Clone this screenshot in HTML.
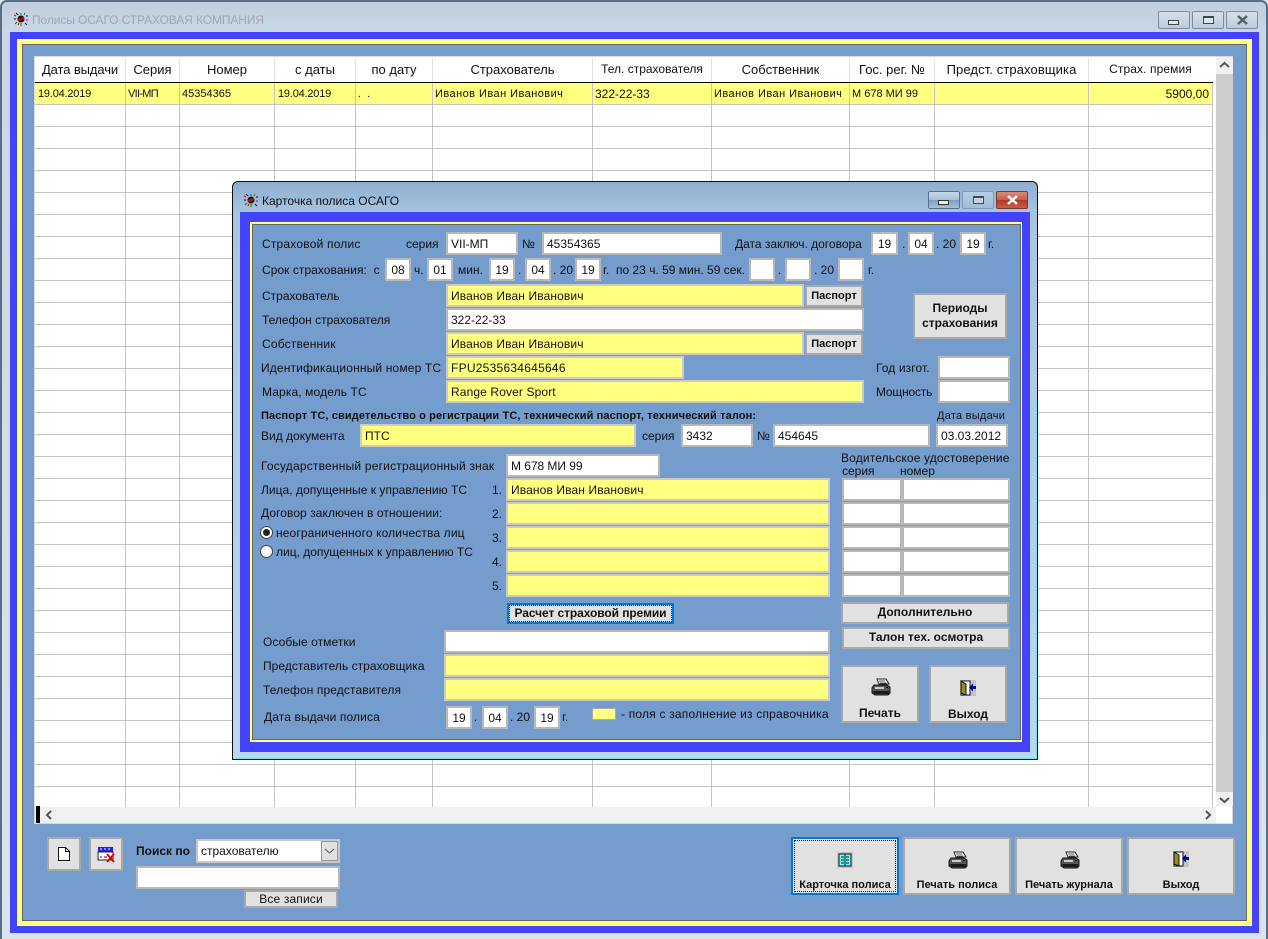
<!DOCTYPE html>
<html lang="ru"><head><meta charset="utf-8"><title>Полисы ОСАГО</title>
<style>
html,body{margin:0;padding:0;width:1268px;height:939px;overflow:hidden;background:#d8e4f2;font-family:"Liberation Sans",Arial,sans-serif;font-size:12px;color:#111}
div,svg{position:absolute;box-sizing:border-box}
.t{white-space:nowrap;line-height:14px}
.h{font-size:13px;top:62px;text-align:center;line-height:15px;white-space:nowrap;color:#111}
.r{font-size:11px;top:87px;line-height:14px;white-space:nowrap}
.n{letter-spacing:.45px}
.v{width:1px;top:83px;height:724px;background:#c4c4c4}
.hv{width:1px;top:58px;height:24px;background:#e2e2e2}
.i{background:#fff;border:2px solid #b8b8b8;line-height:20px;padding-left:3px;white-space:nowrap;color:#111}
.y{background:#ffff80;border-color:#cacaca}
.c{text-align:center;padding-left:0}
.k{letter-spacing:.12px}
.b{background:#e1e1e1;border:2px solid #a8a8a8;text-align:center;font-weight:bold;white-space:nowrap;color:#111}
.bi{background:#e1e1e1;border:2px solid #a8a8a8}
</style></head><body>
<svg width="0" height="0" style="left:0;top:0"><defs>
<g id="pr"><path d="M6 1h9l3 5H8z" fill="#fff" stroke="#222" stroke-width="1"/><path d="M8 3h6M9 5h6" stroke="#555"/><path d="M3 7h13l3 2v6l-2 2H4l-3-2v-5z" fill="#555" stroke="#111"/><path d="M2 13h16v3H3z" fill="#1c1c1c"/><path d="M4 9h9v2H4z" fill="#ccc"/><path d="M15 9h2v1h-2z" fill="#111"/></g>
<g id="dr"><rect width="16" height="16" fill="#c4c4c4"/><rect x="1" y="1" width="9" height="14" fill="#fff" stroke="#111"/><path d="M1 1l5 3v11l-5-2z" fill="#8f8f1e" stroke="#111"/><path d="M16 6h-3V3.500L9 7.500l4 4V9h3z" fill="#000090"/></g>
<g id="ap"><circle cx="8" cy="7" r="3.500" fill="#111"/><path d="M5 8l6-2" stroke="#d00" stroke-width="2"/><path d="M1 7h2M13 4h2M3 1l2 2M12 11l2 2" stroke="#008" stroke-width="1"/><path d="M8 1v2M2 12l2-2M12 1l-1 2M8 11v3" stroke="#080" stroke-width="1"/><path d="M1 3l2 1M13 8h2M5 13l1-2" stroke="#d00" stroke-width="1"/></g>
</defs></svg>

<!-- outer window -->
<div style="left:0;top:0;width:1268px;height:939px;background:linear-gradient(#bfcfdf 0,#c9d8e6 32px,#d8e4f2 100%);border:2px solid #5a6d85;border-bottom:0;border-radius:7px 7px 0 0"></div>
<svg style="left:13px;top:12px" width="16" height="16"><use href="#ap"/></svg>
<div class="t" style="left:32px;top:13px;color:#a3a6aa;font-size:12px;letter-spacing:-.1px">Полисы ОСАГО СТРАХОВАЯ КОМПАНИЯ</div>
<div style="left:1158px;top:11px;width:32px;height:18px;border:1px solid #7d8c9e;border-radius:2px;background:linear-gradient(#d6e0ea,#bccbdb)"><div style="left:9px;top:8px;width:11px;height:5px;border:1px solid #3c4650;background:#e6e6e6"></div></div>
<div style="left:1192px;top:11px;width:32px;height:18px;border:1px solid #7d8c9e;border-radius:2px;background:linear-gradient(#d6e0ea,#bccbdb)"><div style="left:10px;top:4px;width:11px;height:8px;border:1px solid #3c4650;border-top-width:2px;background:#dfe6ec"></div></div>
<div style="left:1226px;top:11px;width:32px;height:18px;border:1px solid #7d8c9e;border-radius:2px;background:linear-gradient(#d6e0ea,#bccbdb)"><svg style="left:9px;top:3px" width="13" height="10"><path d="M2 1l9 8M11 1l-9 8" stroke="#56616e" stroke-width="2.500"/></svg></div>

<div style="left:10px;top:32px;width:1249px;height:901px;background:#4242ff"></div>
<div style="left:17px;top:39px;width:1235px;height:887px;background:#ffff80"></div>
<div style="left:22px;top:44px;width:1225px;height:877px;background:#749ccc;border:1px solid #666"></div>

<!-- grid -->
<div style="left:34px;top:56px;width:1199px;height:768px;background:#fff;border:1px solid #d8d8d8"></div>
<div style="left:35px;top:83px;width:1178px;height:724px;background:repeating-linear-gradient(#fff 0,#fff 21px,#c4c4c4 21px,#c4c4c4 22px)"></div>
<div style="left:35px;top:83px;width:1178px;height:21px;background:#ffff80"></div>
<div style="left:35px;top:82px;width:1178px;height:1px;background:#000"></div>
<div class="v" style="left:125px"></div><div class="v" style="left:179px"></div><div class="v" style="left:274px"></div><div class="v" style="left:355px"></div><div class="v" style="left:432px"></div><div class="v" style="left:592px"></div><div class="v" style="left:711px"></div><div class="v" style="left:849px"></div><div class="v" style="left:934px"></div><div class="v" style="left:1088px"></div><div class="v" style="left:1212px"></div>
<div class="hv" style="left:125px"></div><div class="hv" style="left:179px"></div><div class="hv" style="left:274px"></div><div class="hv" style="left:355px"></div><div class="hv" style="left:432px"></div><div class="hv" style="left:592px"></div><div class="hv" style="left:711px"></div><div class="hv" style="left:849px"></div><div class="hv" style="left:934px"></div><div class="hv" style="left:1088px"></div>
<div class="h" style="left:35px;width:90px;letter-spacing:-.1px">Дата выдачи</div>
<div class="h" style="left:126px;width:53px">Серия</div>
<div class="h" style="left:180px;width:94px">Номер</div>
<div class="h" style="left:275px;width:80px">с даты</div>
<div class="h" style="left:356px;width:76px">по дату</div>
<div class="h" style="left:433px;width:159px">Страхователь</div>
<div class="h" style="left:593px;width:118px;font-size:12px">Тел. страхователя</div>
<div class="h" style="left:712px;width:137px">Собственник</div>
<div class="h" style="left:850px;width:84px">Гос. рег. №</div>
<div class="h" style="left:935px;width:153px;letter-spacing:.1px">Предст. страховщика</div>
<div class="h" style="left:1089px;width:123px;font-size:12px;letter-spacing:.1px">Страх. премия</div>
<div class="r" style="left:38px;letter-spacing:-.2px">19.04.2019</div>
<div class="r" style="left:128px;letter-spacing:-.7px">VII-МП</div>
<div class="r" style="left:182px">45354365</div>
<div class="r" style="left:278px;letter-spacing:-.2px">19.04.2019</div>
<div class="r" style="left:358px">.&nbsp;&nbsp;.</div>
<div class="r n" style="left:435px">Иванов Иван Иванович</div>
<div class="r" style="left:595px;font-size:12px">322-22-33</div>
<div class="r n" style="left:714px">Иванов Иван Иванович</div>
<div class="r" style="left:852px">М 678 МИ 99</div>
<div class="r" style="left:1163px;width:46px;text-align:right;font-size:12px">5900,00</div>

<!-- scrollbars -->
<div style="left:1216px;top:57px;width:17px;height:749px;background:#f0f0f0"></div>
<div style="left:1216px;top:74px;width:17px;height:718px;background:#cdcdcd"></div>
<svg style="left:1218px;top:60px" width="13" height="10"><path d="M2 7l4.500-4 4.500 4" fill="none" stroke="#555" stroke-width="2"/></svg>
<svg style="left:1218px;top:795px" width="13" height="10"><path d="M2 3l4.500 4 4.500-4" fill="none" stroke="#555" stroke-width="2"/></svg>
<div style="left:35px;top:807px;width:1181px;height:16px;background:#f0f0f0"></div>
<div style="left:36px;top:806px;width:4px;height:17px;background:#000"></div>
<svg style="left:44px;top:809px" width="10" height="12"><path d="M7 2L3 6l4 4" fill="none" stroke="#555" stroke-width="2"/></svg>
<svg style="left:1203px;top:809px" width="10" height="12"><path d="M3 2l4 4-4 4" fill="none" stroke="#555" stroke-width="2"/></svg>

<!-- bottom -->
<div class="bi" style="left:47px;top:837px;width:34px;height:34px"></div>
<svg style="left:57px;top:846px" width="14" height="16"><path d="M1.500 1.500h7l4 4v9h-11z" fill="#fff" stroke="#111"/><path d="M8.500 1.500v4h4" fill="none" stroke="#111"/></svg>
<div class="bi" style="left:89px;top:837px;width:34px;height:34px"></div>
<svg style="left:97px;top:846px" width="20" height="18"><rect x="1" y="1" width="15" height="5" fill="#2222dd"/><path d="M3 3h2M7 3h2M11 3h2" stroke="#fff"/><rect x="1" y="6" width="15" height="8" fill="#fff" stroke="#222"/><path d="M3 11h2M7 11h3" stroke="#222"/><path d="M10 8l7 8M17 8l-7 8" stroke="#e00" stroke-width="2"/></svg>
<div class="t" style="left:136px;top:844px;font-weight:bold;color:#111">Поиск по</div>
<div class="i" style="left:196px;top:839px;width:144px;height:24px;border-color:#c8c8c8">страхователю</div>
<div style="left:321px;top:841px;width:17px;height:20px;background:#e1e1e1;border:1px solid #999"></div>
<svg style="left:323px;top:847px" width="13" height="8"><path d="M2 2l4.500 4L11 2" fill="none" stroke="#555" stroke-width="1"/></svg>
<div class="i" style="left:136px;top:866px;width:204px;height:23px"></div>
<div class="b" style="left:244px;top:890px;width:94px;height:18px;font-weight:normal;line-height:14px;letter-spacing:.15px">Все записи</div>

<div class="bi" style="left:791px;top:837px;width:108px;height:58px;border:2px solid #0078d7"><div style="left:1px;top:1px;width:102px;height:52px;border:1px dotted #111"></div></div>
<svg style="left:837px;top:852px" width="16" height="16"><rect width="16" height="16" fill="#c4c4c4"/><rect x="2" y="2" width="12" height="12" fill="#6ff" stroke="#111"/><path d="M4 5h3M9 5h3M4 8h3M9 8h3M4 11h3M9 11h3M8 2v12" stroke="#111"/></svg>
<div class="t" style="left:791px;top:878px;width:108px;text-align:center;font-weight:bold;font-size:11px">Карточка полиса</div>
<div class="bi" style="left:903px;top:837px;width:108px;height:58px"></div>
<svg style="left:948px;top:851px" width="20" height="18"><use href="#pr"/></svg>
<div class="t" style="left:903px;top:878px;width:108px;text-align:center;font-weight:bold;font-size:11px">Печать полиса</div>
<div class="bi" style="left:1015px;top:837px;width:108px;height:58px"></div>
<svg style="left:1060px;top:851px" width="20" height="18"><use href="#pr"/></svg>
<div class="t" style="left:1015px;top:878px;width:108px;text-align:center;font-weight:bold;font-size:11px">Печать журнала</div>
<div class="bi" style="left:1127px;top:837px;width:108px;height:58px"></div>
<svg style="left:1173px;top:851px" width="16" height="16"><use href="#dr"/></svg>
<div class="t" style="left:1127px;top:878px;width:108px;text-align:center;font-weight:bold;font-size:11px">Выход</div>

<!-- dialog -->
<div style="left:232px;top:181px;width:806px;height:579px;background:linear-gradient(#8eaed0 0,#a8c6e2 32px,#bcd8ee 100%);border:1px solid #111;border-radius:6px 6px 0 0"></div>
<div style="left:1036px;top:400px;width:1px;height:359px;background:#6fe0e8"></div>
<div style="left:233px;top:758px;width:804px;height:1px;background:#6fe0e8"></div>
<svg style="left:243px;top:193px" width="16" height="16"><use href="#ap"/></svg>
<div class="t" style="left:262px;top:194px;font-size:12px;color:#111">Карточка полиса ОСАГО</div>
<div style="left:928px;top:191px;width:32px;height:18px;border:1px solid #566f8c;border-radius:2px;background:linear-gradient(#c8d8e8 0,#a4bed8 50%,#7f9fc0 51%,#a4c0dc 100%)"><div style="left:9px;top:8px;width:11px;height:5px;border:1px solid #333;background:#eee"></div></div>
<div style="left:962px;top:191px;width:32px;height:18px;border:1px solid #7f9cba;border-radius:2px;background:linear-gradient(#b8cee2,#a0bcd8)"><div style="left:10px;top:4px;width:11px;height:8px;border:1px solid #3c4a5a;border-top-width:2px;background:#c4d4e4"></div></div>
<div style="left:996px;top:191px;width:32px;height:18px;border:1px solid #7c3a30;border-radius:2px;background:linear-gradient(#dc8c78 0,#c85c48 50%,#b03a24 51%,#c85c44 100%)"><svg style="left:9px;top:3px" width="13" height="10"><path d="M2 1l9 8M11 1l-9 8" stroke="#fff" stroke-width="2.500"/></svg></div>

<div style="left:240px;top:212px;width:790px;height:540px;background:#4242ff"></div>
<div style="left:250px;top:222px;width:772px;height:520px;background:#ffff80"></div>
<div style="left:252px;top:224px;width:769px;height:516px;background:#749ccc;border:1px solid #666"></div>

<div class="t" style="left:262px;top:237px;letter-spacing:.2px">Страховой полис</div>
<div class="t" style="left:406px;top:237px">серия</div>
<div class="i" style="left:446px;top:232px;width:72px;height:23px">VII-МП</div>
<div class="t" style="left:522px;top:237px">№</div>
<div class="i" style="left:542px;top:232px;width:180px;height:23px">45354365</div>
<div class="t" style="left:735px;top:237px">Дата заключ. договора</div>
<div class="i c" style="left:871px;top:232px;width:27px;height:23px">19</div>
<div class="t" style="left:902px;top:237px">.</div>
<div class="i c" style="left:908px;top:232px;width:26px;height:23px">04</div>
<div class="t" style="left:936px;top:237px">. 20</div>
<div class="i c" style="left:960px;top:232px;width:26px;height:23px">19</div>
<div class="t" style="left:988px;top:237px">г.</div>

<div class="t" style="left:262px;top:263px;letter-spacing:.05px">Срок страхования:&nbsp; с</div>
<div class="i c" style="left:385px;top:258px;width:26px;height:23px">08</div>
<div class="t" style="left:414px;top:263px">ч.</div>
<div class="i c" style="left:427px;top:258px;width:26px;height:23px">01</div>
<div class="t" style="left:458px;top:263px">мин.</div>
<div class="i c" style="left:489px;top:258px;width:26px;height:23px">19</div>
<div class="t" style="left:518px;top:263px">.</div>
<div class="i c" style="left:525px;top:258px;width:26px;height:23px">04</div>
<div class="t" style="left:553px;top:263px">. 20</div>
<div class="i c" style="left:575px;top:258px;width:26px;height:23px">19</div>
<div class="t" style="left:603px;top:263px">г.</div>
<div class="t" style="left:616px;top:263px">по 23 ч. 59 мин. 59 сек.</div>
<div class="i" style="left:749px;top:258px;width:26px;height:23px"></div>
<div class="t" style="left:778px;top:263px">.</div>
<div class="i" style="left:785px;top:258px;width:26px;height:23px"></div>
<div class="t" style="left:814px;top:263px">. 20</div>
<div class="i" style="left:838px;top:258px;width:26px;height:23px"></div>
<div class="t" style="left:868px;top:263px">г.</div>

<div class="t" style="left:262px;top:289px">Страхователь</div>
<div class="i y k" style="left:446px;top:284px;width:358px;height:23px">Иванов Иван Иванович</div>
<div class="b" style="left:805px;top:285px;width:58px;height:22px;font-size:11px;line-height:18px">Паспорт</div>
<div class="t" style="left:262px;top:313px">Телефон страхователя</div>
<div class="i" style="left:446px;top:308px;width:418px;height:23px">322-22-33</div>
<div class="t" style="left:262px;top:337px;letter-spacing:.18px">Собственник</div>
<div class="i y k" style="left:446px;top:332px;width:358px;height:23px">Иванов Иван Иванович</div>
<div class="b" style="left:805px;top:333px;width:58px;height:22px;font-size:11px;line-height:18px">Паспорт</div>
<div class="t" style="left:261px;top:361px;letter-spacing:.15px">Идентификационный номер ТС</div>
<div class="i y" style="left:446px;top:356px;width:238px;height:23px;letter-spacing:.25px">FPU2535634645646</div>
<div class="t" style="left:262px;top:385px;letter-spacing:.12px">Марка, модель ТС</div>
<div class="i y k" style="left:446px;top:380px;width:418px;height:23px">Range Rover Sport</div>
<div class="b" style="left:913px;top:293px;width:94px;height:46px;line-height:15px;padding-top:6px">Периоды<br>страхования</div>
<div class="t" style="left:876px;top:361px;letter-spacing:.1px">Год изгот.</div>
<div class="i" style="left:938px;top:356px;width:72px;height:23px"></div>
<div class="t" style="left:876px;top:385px;letter-spacing:-.2px">Мощность</div>
<div class="i" style="left:938px;top:380px;width:72px;height:23px"></div>

<div class="t" style="left:261px;top:409px;font-weight:bold;font-size:11px;letter-spacing:.12px">Паспорт ТС, свидетельство о регистрации ТС, технический паспорт, технический талон:</div>
<div class="t" style="left:937px;top:409px;font-size:11px;letter-spacing:.25px">Дата выдачи</div>
<div class="t" style="left:261px;top:429px">Вид документа</div>
<div class="i y" style="left:360px;top:424px;width:276px;height:23px">ПТС</div>
<div class="t" style="left:642px;top:429px">серия</div>
<div class="i" style="left:681px;top:424px;width:72px;height:23px">3432</div>
<div class="t" style="left:757px;top:429px">№</div>
<div class="i" style="left:773px;top:424px;width:157px;height:23px">454645</div>
<div class="i" style="left:936px;top:424px;width:72px;height:23px">03.03.2012</div>

<div class="t" style="left:261px;top:459px;letter-spacing:.2px">Государственный регистрационный знак</div>
<div class="i" style="left:506px;top:454px;width:154px;height:23px;letter-spacing:-.05px">М 678 МИ 99</div>
<div class="t" style="left:841px;top:451px;letter-spacing:.15px">Водительское удостоверение</div>
<div class="t" style="left:842px;top:464px">серия</div>
<div class="t" style="left:900px;top:464px">номер</div>
<div class="t" style="left:261px;top:483px;letter-spacing:.03px">Лица, допущенные к управлению ТС</div>
<div class="t" style="left:492px;top:483px">1.</div>
<div class="i y k" style="left:506px;top:478px;width:324px;height:23px">Иванов Иван Иванович</div>
<div class="t" style="left:261px;top:506px;letter-spacing:.07px">Договор заключен в отношении:</div>
<div class="t" style="left:492px;top:507px">2.</div>
<div class="i y" style="left:506px;top:502px;width:324px;height:23px"></div>
<div class="t" style="left:492px;top:531px">3.</div>
<div class="i y" style="left:506px;top:526px;width:324px;height:23px"></div>
<div class="t" style="left:492px;top:555px">4.</div>
<div class="i y" style="left:506px;top:550px;width:324px;height:23px"></div>
<div class="t" style="left:492px;top:579px">5.</div>
<div class="i y" style="left:506px;top:574px;width:324px;height:23px"></div>
<div class="i" style="left:842px;top:478px;width:60px;height:23px"></div><div class="i" style="left:902px;top:478px;width:108px;height:23px"></div>
<div class="i" style="left:842px;top:502px;width:60px;height:23px"></div><div class="i" style="left:902px;top:502px;width:108px;height:23px"></div>
<div class="i" style="left:842px;top:526px;width:60px;height:23px"></div><div class="i" style="left:902px;top:526px;width:108px;height:23px"></div>
<div class="i" style="left:842px;top:550px;width:60px;height:23px"></div><div class="i" style="left:902px;top:550px;width:108px;height:23px"></div>
<div class="i" style="left:842px;top:574px;width:60px;height:23px"></div><div class="i" style="left:902px;top:574px;width:108px;height:23px"></div>

<div style="left:260px;top:526px;width:13px;height:13px;border-radius:50%;background:#fff;border:1px solid #444"><div style="left:2px;top:2px;width:7px;height:7px;border-radius:50%;background:#222"></div></div>
<div class="t" style="left:276px;top:526px;letter-spacing:.13px">неограниченного количества лиц</div>
<div style="left:260px;top:545px;width:13px;height:13px;border-radius:50%;background:#fff;border:1px solid #444"></div>
<div class="t" style="left:276px;top:545px">лиц, допущенных к управлению ТС</div>

<div class="b" style="left:507px;top:603px;width:167px;height:21px;border:2px solid #0078d7;line-height:16px;letter-spacing:-.08px"><div style="left:0;top:0;width:163px;height:17px;border:1px dotted #111"></div>Расчет страховой премии</div>
<div class="b" style="left:841px;top:602px;width:168px;height:22px;line-height:17px">Дополнительно</div>
<div class="b" style="left:842px;top:627px;width:168px;height:22px;line-height:17px">Талон тех. осмотра</div>

<div class="t" style="left:263px;top:635px;letter-spacing:.07px">Особые отметки</div>
<div class="i" style="left:444px;top:630px;width:386px;height:23px"></div>
<div class="t" style="left:263px;top:659px;letter-spacing:.04px">Представитель страховщика</div>
<div class="i y" style="left:444px;top:654px;width:386px;height:23px"></div>
<div class="t" style="left:263px;top:683px;letter-spacing:.1px">Телефон представителя</div>
<div class="i y" style="left:444px;top:678px;width:386px;height:23px"></div>
<div class="t" style="left:264px;top:710px;letter-spacing:.11px">Дата выдачи полиса</div>
<div class="i c" style="left:446px;top:706px;width:26px;height:23px">19</div>
<div class="t" style="left:474px;top:710px">.</div>
<div class="i c" style="left:482px;top:706px;width:26px;height:23px">04</div>
<div class="t" style="left:510px;top:710px">. 20</div>
<div class="i c" style="left:534px;top:706px;width:26px;height:23px">19</div>
<div class="t" style="left:562px;top:710px">г.</div>
<div style="left:592px;top:708px;width:24px;height:12px;background:#ffff80;border:1px solid #aaa"></div>
<div class="t" style="left:621px;top:707px;letter-spacing:.2px">- поля с заполнение из справочника</div>

<div class="bi" style="left:841px;top:665px;width:78px;height:58px"></div>
<svg style="left:871px;top:678px" width="20" height="18"><use href="#pr"/></svg>
<div class="t" style="left:841px;top:706px;width:78px;text-align:center;font-weight:bold">Печать</div>
<div class="bi" style="left:929px;top:665px;width:78px;height:58px"></div>
<svg style="left:960px;top:680px" width="16" height="16"><use href="#dr"/></svg>
<div class="t" style="left:929px;top:707px;width:78px;text-align:center;font-weight:bold">Выход</div>
</body></html>
